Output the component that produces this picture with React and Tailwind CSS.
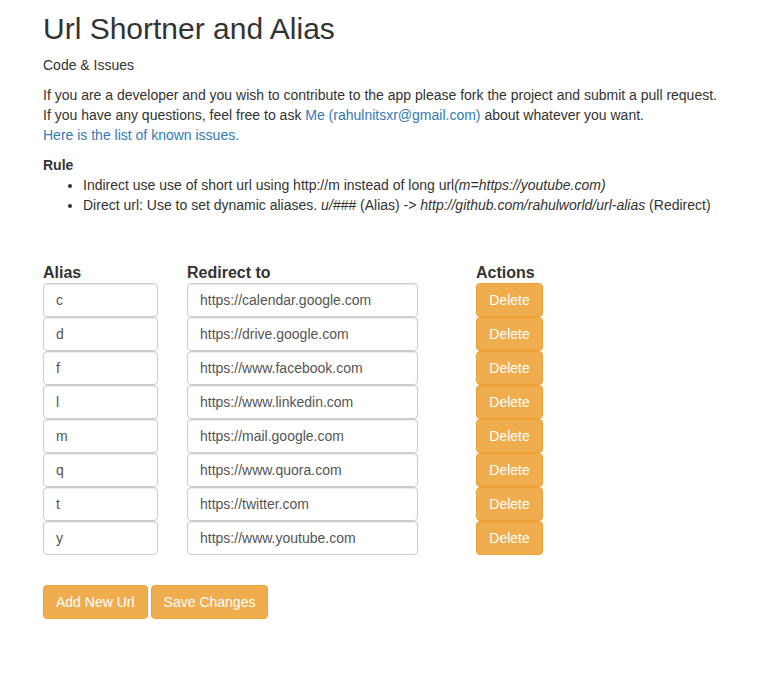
const urls = [
  { alias: 'c', target: 'https://calendar.google.com' },
  { alias: 'd', target: 'https://drive.google.com' },
  { alias: 'f', target: 'https://www.facebook.com' },
  { alias: 'l', target: 'https://www.linkedin.com' },
  { alias: 'm', target: 'https://mail.google.com' },
  { alias: 'q', target: 'https://www.quora.com' },
  { alias: 't', target: 'https://twitter.com' },
  { alias: 'y', target: 'https://www.youtube.com' },
];

const inputCls =
  'block h-[34px] px-3 text-[14px] text-[#555] bg-white border border-[#ccc] rounded-[4px] shadow-[inset_0_1px_1px_rgba(0,0,0,0.075)] outline-none';

const btnCls =
  'h-[34px] px-3 text-[14px] text-white bg-[#f0ad4e] border border-[#eea236] rounded-[4px]';

export default function App() {
  return (
    <div
      className="min-h-[691px] bg-white text-[14px] leading-[20px] text-[#333] pl-[43px] pt-[12px]"
      style={{ fontFamily: '"Liberation Sans", Arial, sans-serif' }}
    >
      <h1 className="text-[30px] leading-[33px] font-normal mb-[10px]">Url Shortner and Alias</h1>
      <p className="mb-[10px]">Code &amp; Issues</p>
      <p className="mb-[10px]">
        If you are a developer and you wish to contribute to the app please fork the project and submit a pull request.
        <br />
        If you have any questions, feel free to ask{' '}
        <a className="text-[#337ab7]">Me (rahulnitsxr@gmail.com)</a> about whatever you want.
        <br />
        <a className="text-[#337ab7]">Here is the list of known issues.</a>
      </p>
      <p className="font-bold">Rule</p>
      <ul className="list-disc pl-10">
        <li>
          Indirect use use of short url using http://m instead of long url<i>(m=https://youtube.com)</i>
        </li>
        <li>
          Direct url: Use to set dynamic aliases. <i>u/###</i> (Alias) -&gt;{' '}
          <i>http://github.com/rahulworld/url-alias</i> (Redirect)
        </li>
      </ul>

      <div className="mt-[48px] flex">
        <div className="w-[144px]">
          <div className="text-[16px] font-bold leading-[20px]">Alias</div>
          {urls.map((u) => (
            <input key={u.alias} readOnly value={u.alias} className={`${inputCls} w-[115px]`} />
          ))}
        </div>
        <div className="w-[289px]">
          <div className="text-[16px] font-bold leading-[20px]">Redirect to</div>
          {urls.map((u) => (
            <input key={u.alias} readOnly value={u.target} className={`${inputCls} w-[231px]`} />
          ))}
        </div>
        <div>
          <div className="text-[16px] font-bold leading-[20px]">Actions</div>
          {urls.map((u) => (
            <button key={u.alias} className={`${btnCls} block w-[67px]`}>
              Delete
            </button>
          ))}
        </div>
      </div>

      <div className="mt-[30px] flex gap-[3px]">
        <button className={btnCls}>Add New Url</button>
        <button className={btnCls}>Save Changes</button>
      </div>
    </div>
  );
}
